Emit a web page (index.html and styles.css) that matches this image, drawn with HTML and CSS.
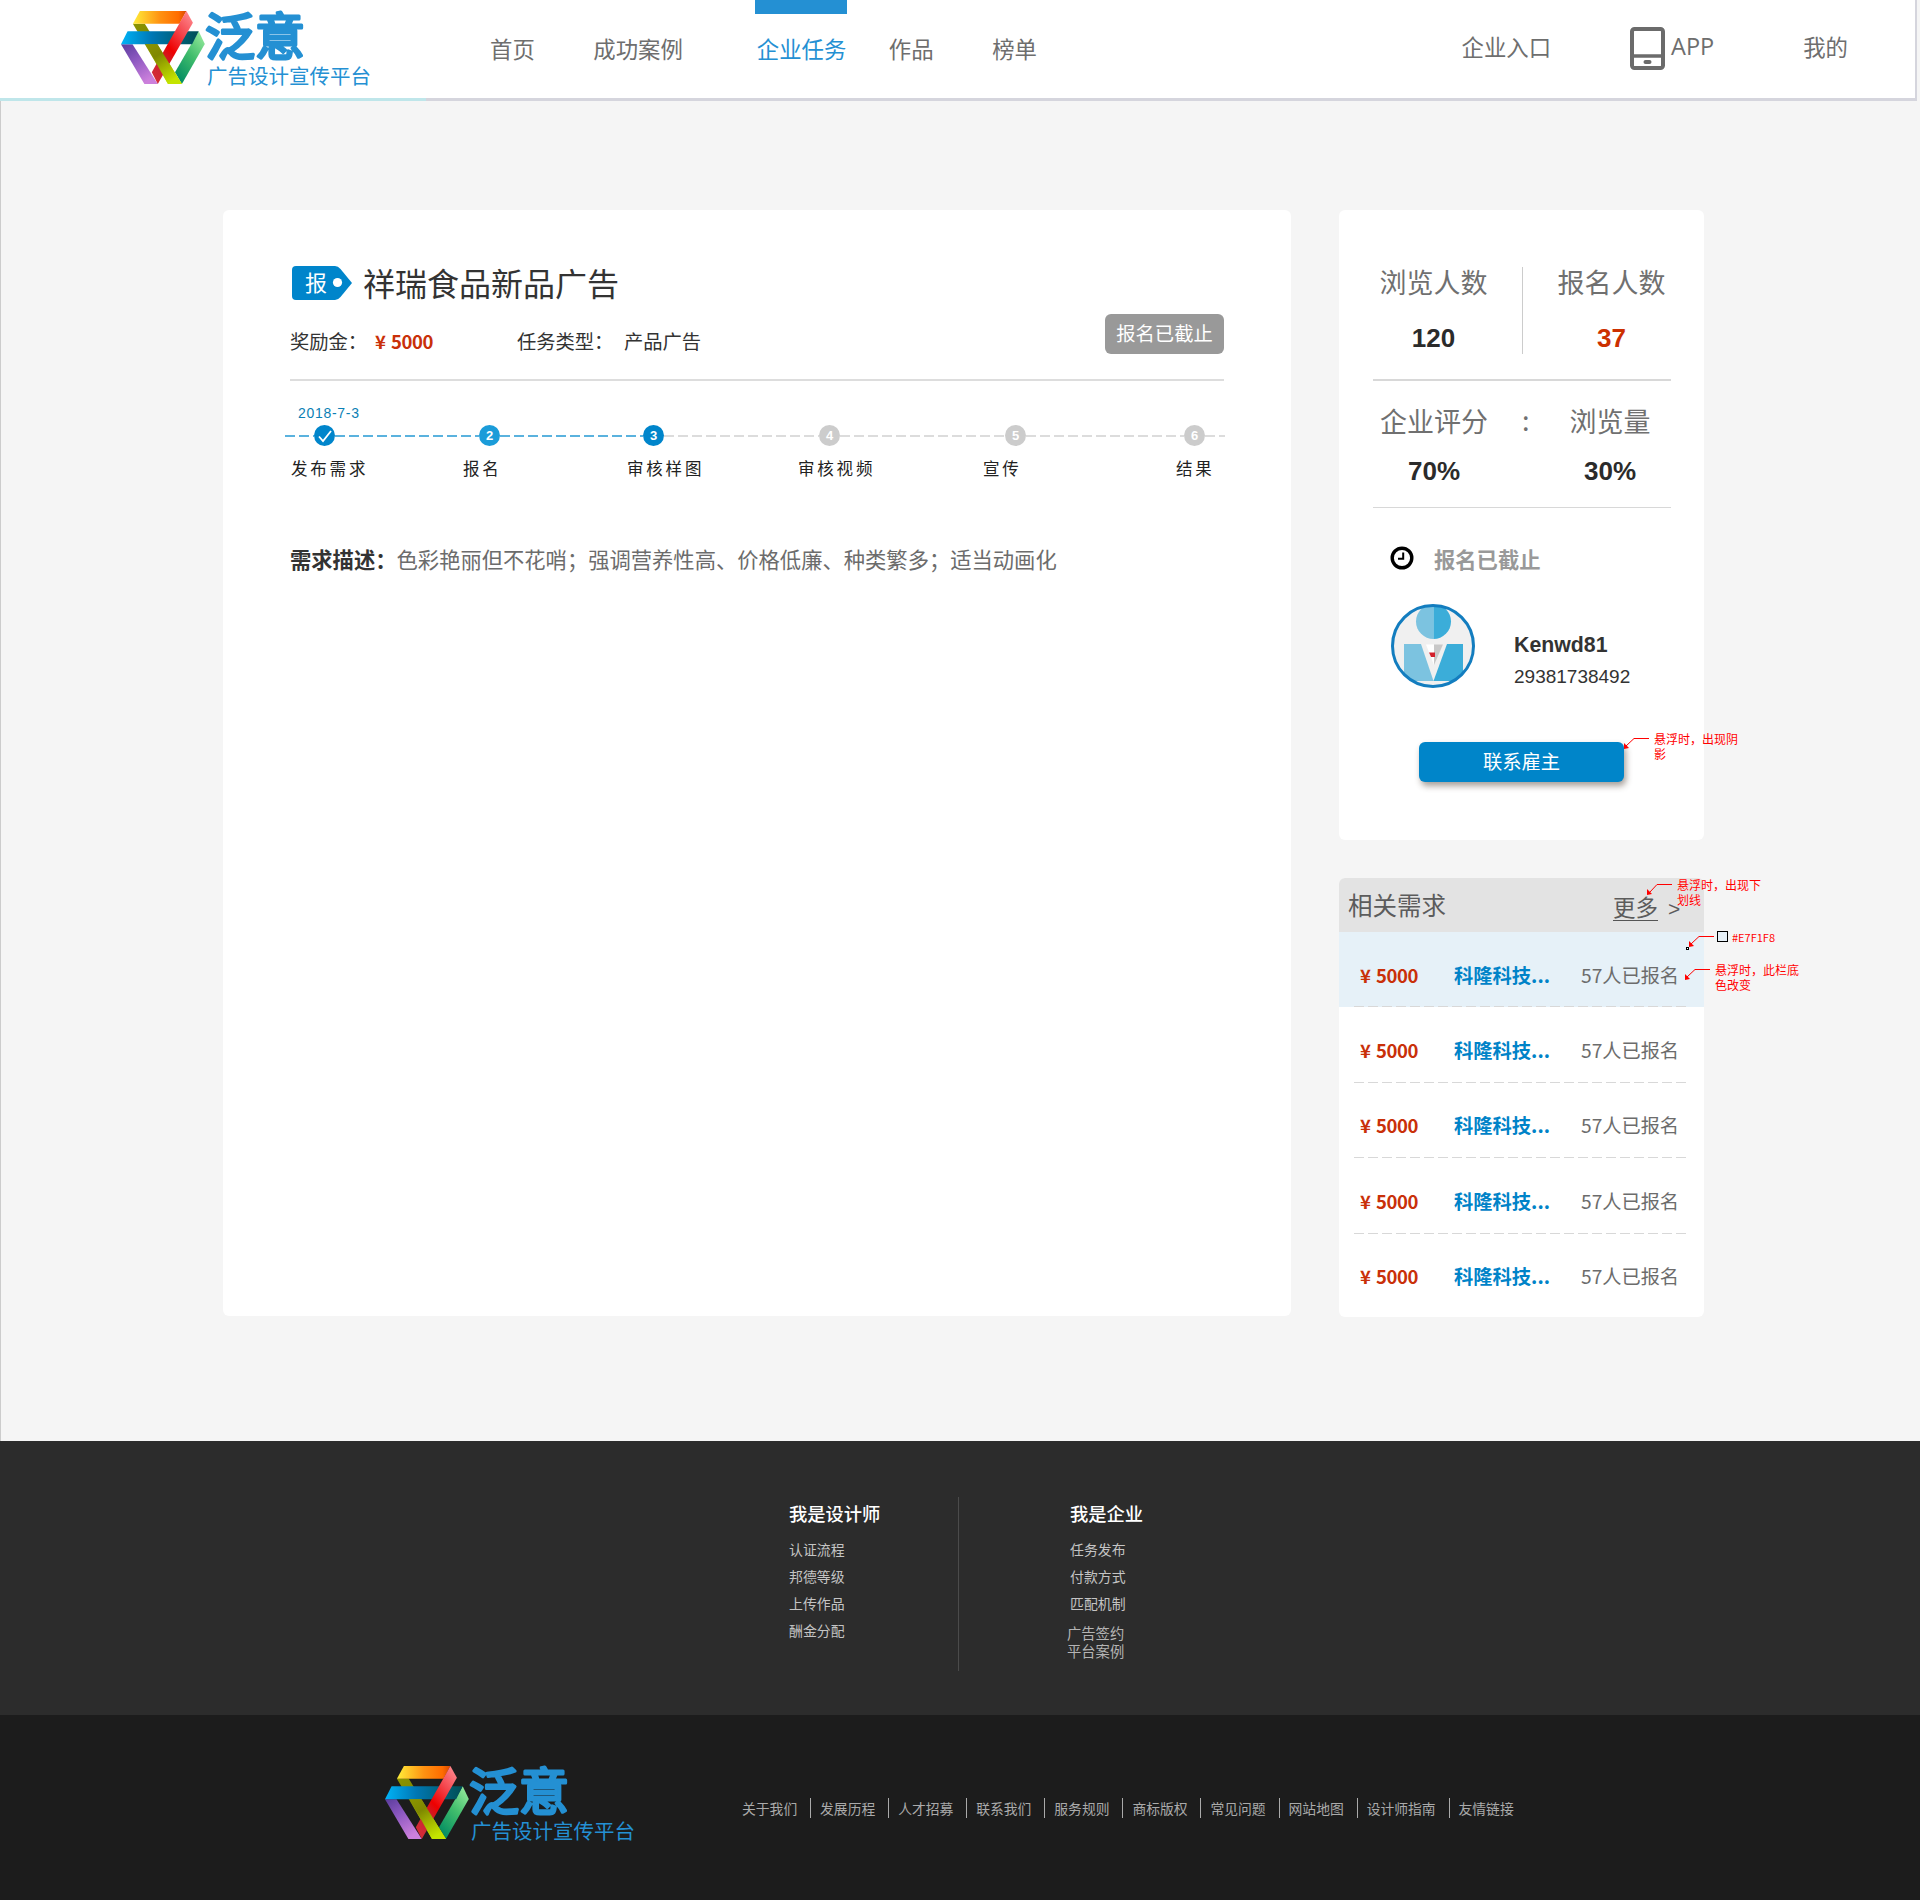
FILE: index.html
```html
<!DOCTYPE html>
<html lang="zh-CN">
<head>
<meta charset="utf-8">
<title>泛意 - 企业任务</title>
<link rel="stylesheet" href="styles.css">
</head>
<body>
<svg class="defs" width="0" height="0" aria-hidden="true">
  <defs>
    <linearGradient id="g-orange" x1="0" x2="1" y1="0" y2="0"><stop offset="0" stop-color="#ffee3a"/><stop offset=".5" stop-color="#ff9312"/><stop offset=".85" stop-color="#ff6c00"/><stop offset="1" stop-color="#d84a00"/></linearGradient>
    <linearGradient id="g-red" x1=".9" x2=".3" y1="0" y2="1"><stop offset="0" stop-color="#ff8a90"/><stop offset=".3" stop-color="#f4454c"/><stop offset=".58" stop-color="#ee0000"/><stop offset=".75" stop-color="#c8202c"/><stop offset="1" stop-color="#d22a36"/></linearGradient>
    <linearGradient id="g-blue" x1="0" x2="1" y1="0" y2="0"><stop offset="0" stop-color="#00b4f8"/><stop offset=".4" stop-color="#0077b4"/><stop offset=".75" stop-color="#006078"/><stop offset="1" stop-color="#004e55"/></linearGradient>
    <linearGradient id="g-green" x1=".8" x2=".2" y1="0" y2="1"><stop offset="0" stop-color="#92e89a"/><stop offset=".45" stop-color="#41bd6c"/><stop offset="1" stop-color="#008a62"/></linearGradient>
    <linearGradient id="g-purple" x1="0" x2=".6" y1="0" y2="1"><stop offset="0" stop-color="#5a3c9c"/><stop offset=".45" stop-color="#8c58c0"/><stop offset="1" stop-color="#cc80dc"/></linearGradient>
    <linearGradient id="g-olive" x1="0" x2=".6" y1="0" y2="1"><stop offset="0" stop-color="#8c9400"/><stop offset=".35" stop-color="#7f8800"/><stop offset=".6" stop-color="#9cac00"/><stop offset="1" stop-color="#c4e400"/></linearGradient>
    <symbol id="mark" viewBox="0 0 84 75">
      <path fill="url(#g-green)" d="M77.7 21.3 83.8 34 60.9 74 54 62.3z"/>
      <path fill="url(#g-purple)" d="M0 34.3H11.5L36.8 74H23.4z"/>
      <path fill="url(#g-olive)" d="M11.9 13.7H23.8L60.9 74H47z"/>
      <path fill="url(#g-blue)" d="M6.6 21.3H77.7L71.1 34.3H0z"/>
      <path fill="url(#g-orange)" d="M18.9 1H65.4L58.5 13.7H11.9z"/>
      <path fill="url(#g-red)" d="M65.4 1 71.9 12.7 36.8 74 30.8 62.3z"/>
      <path fill="url(#g-olive)" d="M24.5 34.3H36.4L60.9 74H47z"/>
    </symbol>
  </defs>
</svg>

<header class="top">
  <a class="logo"><svg class="mark"><use href="#mark"/></svg><span class="brand"><svg width="104" height="50" viewBox="0 0 104 50"><text x="0" y="44.500">泛意</text></svg><small>广告设计宣传平台</small></span></a>
  <nav class="menu">
    <a>首页</a><a>成功案例</a><a class="on">企业任务</a><a>作品</a><a>榜单</a>
  </nav>
  <div class="user">
    <a>企业入口</a>
    <a class="app"><svg width="35" height="43" viewBox="0 0 35 43"><rect x="2" y="2" width="31" height="39" rx="2.5" fill="none" stroke="#6b6b6b" stroke-width="4"/><path d="M2 29H33" stroke="#6b6b6b" stroke-width="3.5"/><rect x="13.500" y="33" width="8" height="4" rx="2" fill="#6b6b6b"/></svg><span>APP</span></a>
    <a>我的</a>
  </div>
</header>

<main class="page">
  <section class="task card">
    <div class="title">
      <svg width="60" height="34" viewBox="0 0 60 34"><path d="M4 0H43Q46 0 48.500 3L60 17 48.500 31Q46 34 43 34H4Q0 34 0 30V4Q0 0 4 0z" fill="#0085cb"/><text x="13" y="25" font-size="22" fill="#fff">报</text><circle cx="45.500" cy="16.500" r="4.600" fill="#fff"/></svg>
      <h1>祥瑞食品新品广告</h1>
    </div>
    <div class="meta">
      <span class="k1">奖励金：</span><b class="price"><i>¥</i>5000</b><span class="k2">任务类型：</span><span>产品广告</span>
      <span class="closed">报名已截止</span>
    </div>
    <div class="date">2018-7-3</div>
    <div class="track">
      <s class="done l0"></s><span class="dot d1"><svg width="16" height="14" viewBox="0 0 16 14"><path d="M2 7.500 6 12 14 2" fill="none" stroke="#fff" stroke-width="1.800"/></svg></span>
      <s class="done l1"></s><span class="dot d2">2</span>
      <s class="done l2"></s><span class="dot d1">3</span>
      <s class="l3"></s><span class="dot">4</span>
      <s class="l4"></s><span class="dot">5</span>
      <s class="l5"></s><span class="dot">6</span>
      <s class="l6"></s>
    </div>
    <div class="labels"><span>发布需求</span><span>报名</span><span>审核样图</span><span>审核视频</span><span>宣传</span><span>结果</span></div>
    <p class="desc"><b>需求描述：</b>色彩艳丽但不花哨；强调营养性高、价格低廉、种类繁多；适当动画化</p>
  </section>

  <aside class="side">
    <section class="stats card">
      <div class="pair first"><div><span>浏览人数</span><b>120</b></div><div><span>报名人数</span><b class="red">37</b></div></div>
      <div class="pair second"><div><span>企业评分</span><b>70%</b></div><em>:</em><div><span>浏览量</span><b>30%</b></div></div>
      <div class="state"><svg width="24" height="24" viewBox="0 0 24 24"><circle cx="12" cy="12" r="9.800" fill="none" stroke="#000" stroke-width="3.400"/><path d="M13.200 6.500V12.800H8" fill="none" stroke="#000" stroke-width="2"/></svg><b>报名已截止</b></div>
      <div class="owner">
        <svg width="84" height="84" viewBox="0 0 84 84"><defs><clipPath id="face"><circle cx="42" cy="42" r="40"/></clipPath></defs>
          <circle cx="42" cy="42" r="40" fill="#f0f0f0"/>
          <g clip-path="url(#face)"><path d="M42.500 0V35A17.500 17.500 0 0 1 42.500 0z" fill="#7cc3e0"/><path d="M42.500 0V35A17.500 17.500 0 0 0 42.500 0z" fill="#3badd9"/>
          <path d="M13 40H30L42.500 77H13z" fill="#7cc3e0"/><path d="M56 40H72V77H42.500z" fill="#3badd9"/><path d="M35 40.500H43V61z" fill="#fff"/><path d="M43 40.500H52L43 61z" fill="#c8c8c8"/><path d="M38 48.500H44V53H40z" fill="#d3202c"/></g>
          <circle cx="42" cy="42" r="40.500" fill="none" stroke="#137dbf" stroke-width="3"/></svg>
        <div class="who"><b>Kenwd81</b><span>29381738492</span></div>
      </div>
      <a class="contact">联系雇主</a>
    </section>

    <section class="related card">
      <div class="head"><h2>相关需求</h2><a>更多</a><span>&gt;</span></div>
      <div class="row hover"><b class="price"><i>¥</i>5000</b><b class="co">科隆科技...</b><span>57人已报名</span></div>
      <div class="row"><b class="price"><i>¥</i>5000</b><b class="co">科隆科技...</b><span>57人已报名</span></div>
      <div class="row"><b class="price"><i>¥</i>5000</b><b class="co">科隆科技...</b><span>57人已报名</span></div>
      <div class="row"><b class="price"><i>¥</i>5000</b><b class="co">科隆科技...</b><span>57人已报名</span></div>
      <div class="row"><b class="price"><i>¥</i>5000</b><b class="co">科隆科技...</b><span>57人已报名</span></div>
    </section>
  </aside>
</main>

<div class="note n1">悬浮时，出现阴影</div>
<div class="note n2">悬浮时，出现下划线</div>
<div class="note n3">#E7F1F8</div>
<div class="note n4">悬浮时，此栏底色改变</div>
<svg class="leaders" width="110" height="260" viewBox="1620 730 110 260">
  <g fill="none" stroke="#f00" stroke-width="1"><path d="M1649 738.500H1634L1626 746"/><path d="M1672 884.500H1657L1650 892"/><path d="M1714 936.500H1699L1691 944"/><path d="M1710 969.500H1695L1687 977"/></g>
  <g fill="#f00"><path d="M1624 749V743L1629 748z"/><path d="M1647 895V889L1652 894z"/><path d="M1689 947V941L1694 946z"/><path d="M1685 980V974L1690 979z"/></g>
  <rect x="1717.500" y="931.500" width="10" height="10" fill="#e7f1f8" stroke="#000"/><rect x="1686.500" y="947.500" width="2" height="2" fill="#fff" stroke="#000"/>
</svg>

<footer>
  <div class="links">
    <div class="col"><h3>我是设计师</h3><a>认证流程</a><a>邦德等级</a><a>上传作品</a><a>酬金分配</a></div>
    <div class="col right"><h3>我是企业</h3><a>任务发布</a><a>付款方式</a><a>匹配机制</a><a class="thin">广告签约</a><a class="thin last">平台案例</a></div>
  </div>
  <div class="base">
    <a class="logo"><svg class="mark"><use href="#mark"/></svg><span class="brand"><svg width="104" height="50" viewBox="0 0 104 50"><text x="0" y="44.500">泛意</text></svg><small>广告设计宣传平台</small></span></a>
    <nav><a>关于我们</a><a>发展历程</a><a>人才招募</a><a>联系我们</a><a>服务规则</a><a>商标版权</a><a>常见问题</a><a>网站地图</a><a>设计师指南</a><a>友情链接</a></nav>
  </div>
</footer>
</body>
</html>
```
FILE: styles.css
```css
* { box-sizing: border-box; margin: 0; padding: 0; }
body { position: relative; width: 1920px; height: 1900px; overflow: hidden; background: #f5f5f5; color: #333; font-family: "Noto Sans CJK SC", sans-serif; font-weight: 400; }
b, h1, h2, h3 { display: inline-block; }
b { font-weight: 700; }
i, em { font-style: normal; }
a, span { white-space: nowrap; }
.defs { position: absolute; }
.card { background: #fff; border-radius: 6px; }

/* header */
.top { display: flex; width: 1917px; height: 101px; padding-left: 121px; background: #fff; border-right: 2px solid #dcdce0; border-bottom: 3px solid #d5d5dd; border-image: linear-gradient(90deg, #bfe6ea 0 428px, #d5d5dd 428px) 3; border-top: 0; border-left: 0; }
.logo { display: flex; width: 264px; height: 80px; }
.top .logo { margin-top: 10px; }
.mark { flex: none; width: 84px; height: 75px; }
.brand { display: flex; flex-direction: column; color: #2490d3; }
.brand svg { flex: none; overflow: visible; font-size: 50px; font-weight: 400; fill: #2490d3; stroke: #2490d3; stroke-width: 3px; stroke-linejoin: round; stroke-linecap: round; }
.brand small { margin-left: 2px; font-size: 20.500px; line-height: 30px; font-weight: 400; }
.menu { display: flex; margin-left: 105px; font-size: 22.400px; line-height: 96px; color: #6e6e6e; }
.menu a { margin-right: 58.500px; height: 98px; }
.menu a:nth-child(2) { margin-right: 72px; }
.menu a.on { width: 92px; margin-right: 42px; padding-left: 2px; color: #2490d3; background: linear-gradient(#2490d3, #2490d3) no-repeat; background-size: 92px 14px; }
.user { display: flex; margin: 0 67px 0 auto; font-size: 22.400px; line-height: 93px; color: #6e6e6e; }
.app { display: flex; margin: 0 89px 0 79px; }
.app svg { margin-top: 27px; }
.app span { margin-left: 6px; font: 400 23.500px/93px "Open Sans", sans-serif; }

/* page */
.page { display: flex; gap: 48px; height: 1340px; padding: 109px 0 0 222px; border-left: 1px solid #ccc; }
.task { width: 1068px; height: 1106px; padding: 53px 67px; }
.title { display: flex; height: 44px; }
.title svg { margin: 3px 11px 0 2px; }
.title h1 { font-size: 32px; font-weight: 400; line-height: 38px; }
.meta { display: flex; height: 74px; border-bottom: 2px solid #ddd; font-size: 19.300px; line-height: 68px; }
.price { color: #c93009; font-size: 18.500px; line-height: 28px; letter-spacing: -.4px; white-space: nowrap; }
.price i { display: inline-block; width: 16px; }
.meta .price { width: 58px; line-height: 68px; }
.k1 { width: 85px; }
.k2 { width: 107px; margin-left: 84px; }
.closed { width: 119px; height: 40px; margin: 7px 0 0 auto; border-radius: 6px; background: #999; color: #fff; line-height: 38px; text-align: center; }
.date { height: 45px; padding: 22px 0 0 8px; color: #0b7fb5; font: 14px/20px "Liberation Sans", sans-serif; letter-spacing: .7px; }
.track { display: flex; align-items: center; height: 21px; width: 940px; margin: -1px 0 0 -5px; }
.track s { height: 2px; background: repeating-linear-gradient(90deg, #dcdcdc 0 10px, transparent 10px 14px); }
.track s.done { background: repeating-linear-gradient(90deg, #5ab2de 0 10px, transparent 10px 14px); }
.l0 { width: 29px; } .l1 { width: 144px; } .l2 { width: 143px; } .l3 { width: 155px; } .l4 { width: 165px; } .l5 { width: 158px; } .l6 { width: 20px; }
.dot { display: flex; align-items: center; justify-content: center; flex: none; width: 21px; height: 21px; border-radius: 50%; background: #ccc; color: #fff; font: 700 13px/21px "Liberation Sans", sans-serif; }
.d1 { background: #0085cb; } .d2 { background: #1b9cd9; }
.labels { display: grid; grid-template-columns: 172px 164px 171px 185px 193px 60px; padding: 10px 0 0 1px; font-size: 16.500px; line-height: 24px; letter-spacing: 2.800px; color: #222; }
.desc { margin-top: 61px; font-size: 21.300px; line-height: 36px; color: #6c6c6c; white-space: nowrap; }
.desc b { color: #333; }

/* right column */
.side { width: 365px; }
.stats { height: 630px; padding: 57px 33px 0 34px; }
.pair { display: flex; justify-content: space-between; border-bottom: 2px solid #d8d8d8; }
.pair > div { display: flex; flex-direction: column; align-items: center; width: 122px; }
.pair span { font-size: 27px; font-weight: 400; color: #707070; }
.pair b { font: 700 26px/30px "Liberation Sans", sans-serif; color: #2b2b2b; }
.pair b.red { color: #cc3000; }
.first { height: 114px; }
.first span { line-height: 30px; margin-bottom: 26px; }
.first > div { height: 87px; }
.first > div:first-child { width: 150px; padding-right: 28px; border-right: 1px solid #ccc; }
.first > div:last-child { width: 119px; }
.second { height: 127px; padding-top: 22px; border-bottom-width: 1px; }
.second span { line-height: 36px; margin-bottom: 17px; }
.second em { width: 20px; padding-left: 10px; font-size: 27px; line-height: 33px; color: #707070; }
.state { display: flex; height: 60px; padding: 38px 0 0 17px; }
.state b { margin-left: 20px; font-size: 21.300px; line-height: 26px; color: #999; }
.owner { display: flex; margin: 36px 0 0 18px; }
.who { display: flex; flex-direction: column; margin: 25px 0 0 39px; font: 19px/32px "Liberation Sans", sans-serif; color: #333; }
.who b { font-size: 21.300px; line-height: 32px; }
.contact { display: block; width: 205px; height: 40px; margin: 49px 0 0 46px; border-radius: 6px; background: #0085c9; box-shadow: 2px 4px 6px rgba(60,45,30,.45); color: #fff; font-size: 19.300px; line-height: 38px; text-align: center; }
.related { height: 439px; margin-top: 38px; overflow: hidden; }
.head { display: flex; height: 54px; padding-left: 9px; background: #e3e3e3; color: #5c5c5c; }
.head h2 { width: 265px; font-size: 24.500px; font-weight: 400; line-height: 53px; }
.head a { height: 43px; font-size: 22.500px; line-height: 57px; border-bottom: 1px solid #555; margin-bottom: 11px; }
.head span { margin-left: 10px; font: 21px/62px "Liberation Sans", sans-serif; }
.row { display: flex; align-items: center; height: 75.500px; padding: 10px 0 0 21px; background: repeating-linear-gradient(90deg, #d8d8d8 0 10px, transparent 10px 14px) no-repeat 15px 100% / 336px 1px; }
.row:last-child { background: none; }
.row.hover { background-color: #e6f1f8; height: 75px; }
.row .price { width: 94px; }
.row .co { width: 127px; font-size: 19.300px; line-height: 28px; color: #0083c8; }
.row span { font-size: 19.200px; line-height: 28px; color: #6c6c6c; }

/* annotations */
.note { position: absolute; width: 86px; color: #f00; font-size: 12px; font-weight: 400; line-height: 15px; white-space: normal; text-shadow: 0 0 1px #fff; }
.n1 { left: 1654px; top: 731px; } .n2 { left: 1677px; top: 877px; }
.n3 { left: 1732px; top: 930px; font-size: 11px; } .n4 { left: 1715px; top: 962px; }
.leaders { position: absolute; left: 1620px; top: 730px; }

/* footer */
.links { display: flex; height: 274px; padding: 56px 0 0 789px; background: #2c2c2c; }
.col { width: 170px; height: 174px; border-right: 1px solid #4b4b4b; }
.col.right { padding-left: 111px; width: 300px; border: 0; }
.col h3 { font-size: 18.300px; line-height: 32px; font-weight: 500; color: #fff; white-space: nowrap; margin-bottom: 7px; }
.col a { display: block; font-size: 13.900px; line-height: 27px; font-weight: 400; color: #c4c4c4; }
.col a.thin { margin: 2px 0 0 -3px; font-size: 14.300px; color: #b4b4b4; }
.col a.thin.last { margin-top: -9px; }
.base { display: flex; height: 185px; padding: 50px 0 0 385px; background: #1c1c1c; }
.base nav { display: flex; margin: 33px 0 0 84px; }
.base nav a { height: 20px; padding: 0 12.900px 0 9px; border-right: 1px solid #aaa; font-size: 13.800px; line-height: 20px; color: #aaa; }
.base nav a:last-child { border: 0; }
```
